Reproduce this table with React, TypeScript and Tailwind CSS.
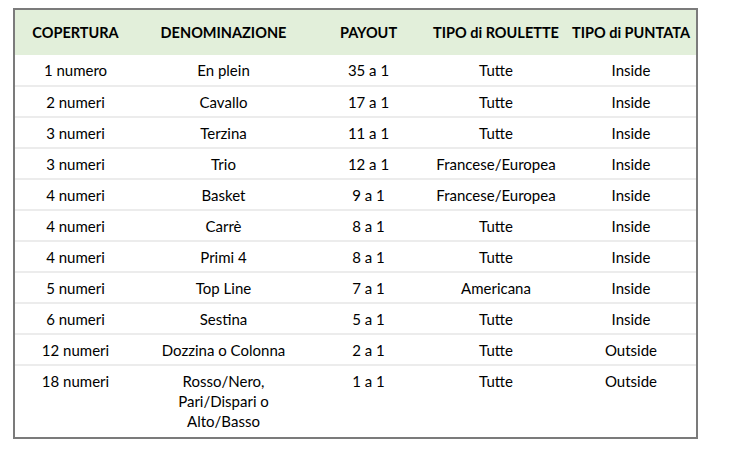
const rows: [string, string, string, string, string][] = [
  ["1 numero", "En plein", "35 a 1", "Tutte", "Inside"],
  ["2 numeri", "Cavallo", "17 a 1", "Tutte", "Inside"],
  ["3 numeri", "Terzina", "11 a 1", "Tutte", "Inside"],
  ["3 numeri", "Trio", "12 a 1", "Francese/Europea", "Inside"],
  ["4 numeri", "Basket", "9 a 1", "Francese/Europea", "Inside"],
  ["4 numeri", "Carrè", "8 a 1", "Tutte", "Inside"],
  ["4 numeri", "Primi 4", "8 a 1", "Tutte", "Inside"],
  ["5 numeri", "Top Line", "7 a 1", "Americana", "Inside"],
  ["6 numeri", "Sestina", "5 a 1", "Tutte", "Inside"],
  ["12 numeri", "Dozzina o Colonna", "2 a 1", "Tutte", "Outside"],
];

const heads = ["COPERTURA", "DENOMINAZIONE", "PAYOUT", "TIPO di ROULETTE", "TIPO di PUNTATA"];

export default function App() {
  return (
    <div className="h-[459px] w-[730px] bg-white pl-[13px] pt-[8px] font-['Lato',sans-serif] text-[15px] text-black">
      <div className="w-[685px] border-2 border-[#7b7b7b]">
        <table className="w-full border-collapse">
          <colgroup>
            <col className="w-[121px]" />
            <col className="w-[175px]" />
            <col className="w-[115px]" />
            <col className="w-[140px]" />
            <col />
          </colgroup>
          <thead>
            <tr className="h-[45px] bg-[#e2efda]">
              {heads.map((h) => (
                <th key={h} className="whitespace-nowrap text-center text-[14.5px] font-bold">
                  {h}
                </th>
              ))}
            </tr>
          </thead>
          <tbody>
            {rows.map((r, i) => (
              <tr key={i} className="h-[31px] border-b-2 border-[#ececec]">
                {r.map((c, j) => (
                  <td key={j} className="text-center leading-5">
                    {c}
                  </td>
                ))}
              </tr>
            ))}
            <tr className="h-[72px] align-top">
              <td className="pt-[5px] text-center leading-5">18 numeri</td>
              <td className="pt-[5px] text-center leading-5">
                Rosso/Nero,
                <br />
                Pari/Dispari o
                <br />
                Alto/Basso
              </td>
              <td className="pt-[5px] text-center leading-5">1 a 1</td>
              <td className="pt-[5px] text-center leading-5">Tutte</td>
              <td className="pt-[5px] text-center leading-5">Outside</td>
            </tr>
          </tbody>
        </table>
      </div>
    </div>
  );
}
